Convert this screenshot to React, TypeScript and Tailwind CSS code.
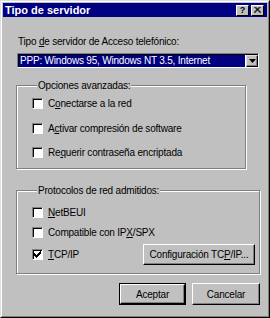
import React from "react";

function Box({ checked = false }: { checked?: boolean }) {
  return (
    <div className="w-[11px] h-[11px] shrink-0 bg-white border border-t-[#808080] border-l-[#808080] border-b-white border-r-white shadow-[inset_1px_1px_0_#000]">
      {checked && (
        <svg width="9" height="9" viewBox="0 0 9 9" className="block">
          <path d="M1.5 3.5 L3.5 5.5 L7.5 1.5 M1.5 4.5 L3.5 6.5 L7.5 2.5 M1.5 5.5 L3.5 7.5 L7.5 3.5" stroke="#000" strokeWidth="1" fill="none" shapeRendering="crispEdges" />
        </svg>
      )}
    </div>
  );
}

function Row({ children, checked = false, className = "" }: { children: React.ReactNode; checked?: boolean; className?: string }) {
  return (
    <div className={"flex items-center h-[13px] " + className}>
      <Box checked={checked} />
      <span className="ml-[5px] leading-[13px] whitespace-nowrap">{children}</span>
    </div>
  );
}

function Btn({ children, className = "" }: { children: React.ReactNode; className?: string }) {
  return (
    <div className={"flex items-center justify-center bg-[#c0c0c0] border border-t-white border-l-white border-b-black border-r-black shadow-[inset_-1px_-1px_0_#808080] whitespace-nowrap " + className}>
      {children}
    </div>
  );
}

export default function App() {
  return (
    <div className="w-[270px] h-[318px] bg-[#c0c0c0] border border-t-[#dfdfdf] border-l-[#dfdfdf] border-b-black border-r-black font-['Liberation_Sans',Arial,sans-serif] text-[10px] tracking-[-0.2px] text-black overflow-hidden">
      <div className="h-full border border-t-white border-l-white border-b-[#808080] border-r-[#808080] p-[1px] flex flex-col">
        {/* Title bar */}
        <div className="h-[14px] bg-[#000080] flex items-center justify-between pl-[2px] pr-[3px] shrink-0">
          <span className="text-white font-bold text-[11px] tracking-normal leading-[14px] whitespace-nowrap">Tipo de servidor</span>
          <div className="flex gap-[2px]">
            <div className="w-[13px] h-[11px] bg-[#c0c0c0] border border-t-white border-l-white border-b-black border-r-black flex items-center justify-center text-[9px] font-bold leading-none tracking-normal">?</div>
            <div className="w-[13px] h-[11px] bg-[#c0c0c0] border border-t-white border-l-white border-b-black border-r-black flex items-center justify-center">
              <svg width="7" height="6" viewBox="0 0 7 6" className="block">
                <path d="M0.5 0 L6.5 6 M1.5 0 L7 5.5 M6.5 0 L0.5 6 M5.5 0 L0 5.5" stroke="#000" strokeWidth="1" />
              </svg>
            </div>
          </div>
        </div>

        {/* Content */}
        <div className="pl-[13px] flex flex-col">
          <div className="mt-[18px] h-[13px] leading-[13px] pl-[2px] whitespace-nowrap">
            Tipo <span className="underline">d</span>e servidor de Acceso telefónico:
          </div>

          {/* Combo */}
          <div className="mt-[5px] ml-[1px] w-[242px] h-[15px] bg-white border border-t-[#808080] border-l-[#808080] border-b-white border-r-white shadow-[inset_1px_1px_0_#000] pt-[1px] pl-[1px] flex items-stretch">
            <div className="flex-1 bg-[#000080] text-white leading-[11px] pl-[1px] whitespace-nowrap overflow-hidden mr-[1px]">
              PPP: Windows 95, Windows NT 3.5, Internet
            </div>
            <div className="w-[12px] bg-[#c0c0c0] border border-t-[#dfdfdf] border-l-[#dfdfdf] border-b-black border-r-black shadow-[inset_-1px_-1px_0_#808080] flex items-center justify-center">
              <svg width="7" height="4" viewBox="0 0 7 4" className="block">
                <path d="M0 0 H7 L3.5 4 Z" fill="#000" />
              </svg>
            </div>
          </div>

          {/* Group 1 */}
          <fieldset className="mt-[11px] w-[230px] border border-[#808080] shadow-[1px_1px_0_#fff,inset_1px_1px_0_#fff] pl-[15px] pt-[5px] pb-[9px] m-0">
            <legend className="ml-[5px] px-[1px] h-[13px] leading-[13px] bg-[#c0c0c0] whitespace-nowrap">Opciones avanzadas:</legend>
            <Row>C<span className="underline">o</span>nectarse a la red</Row>
            <Row className="mt-[12px]">A<span className="underline">c</span>tivar compresión de software</Row>
            <Row className="mt-[11px]">Re<span className="underline">q</span>uerir contraseña encriptada</Row>
          </fieldset>

          {/* Group 2 */}
          <fieldset className="mt-[15px] w-[244px] border border-[#808080] shadow-[1px_1px_0_#fff,inset_1px_1px_0_#fff] pl-[15px] pr-[4px] pt-[9px] pb-[8px] m-0">
            <legend className="ml-[5px] px-[1px] h-[13px] leading-[13px] bg-[#c0c0c0] whitespace-nowrap">Protocolos de red admitidos:</legend>
            <Row><span className="underline">N</span>etBEUI</Row>
            <Row className="mt-[7px]">Compatible con IP<span className="underline">X</span>/SPX</Row>
            <div className="mt-[5px] h-[21px] flex items-center justify-between">
              <div className="flex items-center">
                <Box checked />
                <span className="ml-[5px] whitespace-nowrap"><span className="underline">T</span>CP/IP</span>
              </div>
              <Btn className="w-[112px] h-[21px]">Configuración TC<span className="underline">P</span>/IP...</Btn>
            </div>
          </fieldset>

          {/* Buttons */}
          <div className="mt-[9px] w-[244px] flex justify-end gap-[6px]">
            <div className="w-[67px] h-[22px] border border-black">
              <Btn className="w-full h-full">Aceptar</Btn>
            </div>
            <Btn className="w-[68px] h-[22px]">Cancelar</Btn>
          </div>
        </div>
      </div>
    </div>
  );
}
